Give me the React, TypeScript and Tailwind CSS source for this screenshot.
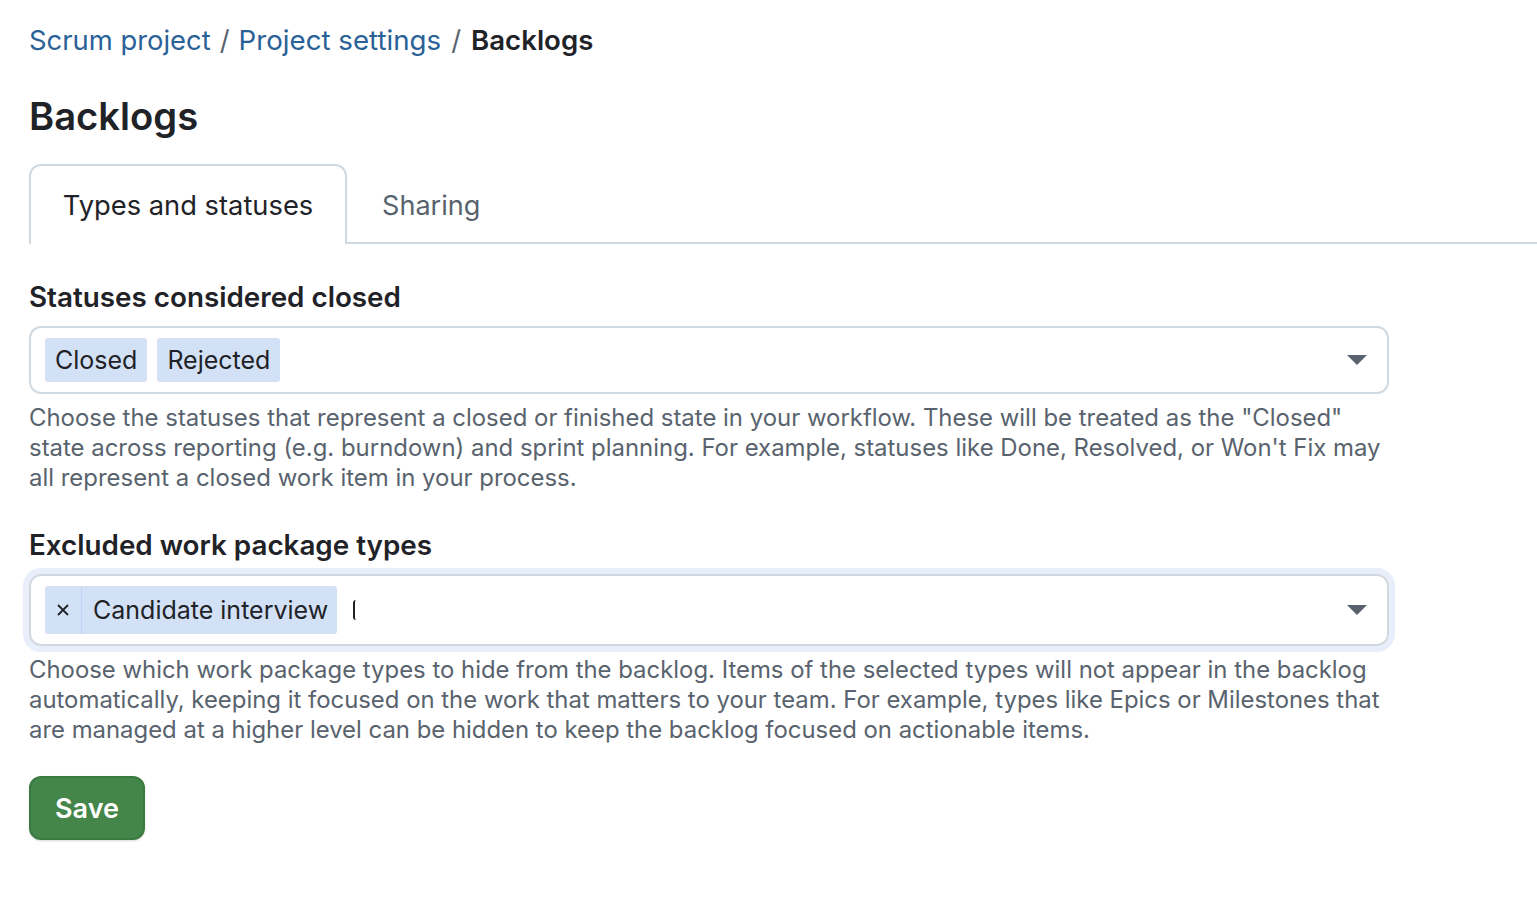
function Arrow() {
  return (
    <svg width="20" height="10" viewBox="0 0 20 10" className="shrink-0">
      <path d="M0 0h20L10 10z" fill="#59636e" />
    </svg>
  );
}

export default function App() {
  return (
    <div className="min-h-[897px] overflow-hidden bg-white font-['Inter',sans-serif] text-[#1f2328]">
      <nav className="mt-[22px] flex h-[36px] items-center pl-[29px] text-[27.4px] leading-[36px]">
        <a className="text-[#2a6196]">Scrum project</a>
        <span className="mx-[9px] text-[#59636e]">/</span>
        <a className="text-[27.7px] text-[#2a6196]">Project settings</a>
        <span className="mx-[10px] text-[#59636e]">/</span>
        <span className="text-[27.6px] font-semibold">Backlogs</span>
      </nav>

      <h1 className="mt-[32px] pl-[29px] text-[38.2px] font-semibold leading-[53px]">Backlogs</h1>

      <div className="ml-[29px] mt-[21px] flex h-[80px] items-end">
        <div className="flex h-[80px] w-[318px] items-center justify-center rounded-t-[12px] border-2 border-b-0 border-[#d1d9e0] bg-white pt-[2px] text-[27.3px]">
          Types and statuses
        </div>
        <div className="flex h-[80px] flex-1 items-center border-b-2 border-[#d1d9e0] pl-[35px] pt-[6px] text-[27.1px] text-[#59636e]">Sharing</div>
      </div>

      <div className="ml-[29px] w-[1360px]">
        <label className="mt-[35px] block text-[27.8px] font-semibold leading-[36px]">Statuses considered closed</label>
        <div className="mt-[11px] flex h-[68px] items-center justify-between rounded-[12px] border-2 border-[#d1d9e0] pl-[14px] pr-[20px]">
          <div className="flex gap-[10px]">
            <span className="flex h-[44px] items-center rounded-[3px] bg-[#d3e1f6] px-[10px] pt-[2px] text-[25px]">Closed</span>
            <span className="flex h-[44px] items-center rounded-[3px] bg-[#d3e1f6] px-[10px] pt-[2px] text-[25px]">Rejected</span>
          </div>
          <Arrow />
        </div>
        <p className="mt-[9px] text-[23.93px] leading-[30px] text-[#59636e]">
          Choose the statuses that represent a closed or finished state in your workflow. These will be treated as the "Closed" state across reporting (e.g. burndown) and sprint planning. For example, statuses like Done, Resolved, or Won't Fix may all represent a closed work item in your process.
        </p>

        <label className="mt-[34px] block text-[27.8px] font-semibold leading-[36px]">Excluded work package types</label>
        <div className="mt-[11px] flex h-[72px] items-center justify-between rounded-[12px] border-2 border-[#d1d9e0] pl-[14px] pr-[20px] shadow-[0_0_0_6px_#e8effb]">
          <div className="flex items-center">
            <span className="flex h-[48px] items-center rounded-[3px] bg-[#d3e1f6] text-[25px]">
              <span className="flex h-full w-[37px] items-center justify-center border-r border-[#bfd6f6]">
                <svg width="12" height="12" viewBox="0 0 12 12">
                  <path d="M1 1l10 10M11 1L1 11" stroke="#1f2328" strokeWidth="1.8" />
                </svg>
              </span>
              <span className="pl-[11px] pr-[9px] pt-[2px]">Candidate interview</span>
            </span>
            <span className="ml-[16px] h-[20px] w-[3px] rounded-l-full border-l-2 border-[#1f2328]" />
          </div>
          <Arrow />
        </div>
        <p className="mt-[9px] text-[23.9px] leading-[30px] text-[#59636e]">
          Choose which work package types to hide from the backlog. Items of the selected types will not appear in the backlog automatically, keeping it focused on the work that matters to your team. For example, types like Epics or Milestones that are managed at a higher level can be hidden to keep the backlog focused on actionable items.
        </p>

        <button className="mt-[31px] flex h-[64px] w-[116px] items-center justify-center rounded-[12px] border-2 border-[#3b7a40] bg-[#44864a] pt-[2px] text-[27px] font-semibold text-white shadow-[0_1px_2px_rgba(0,0,0,0.15)]">
          Save
        </button>
      </div>
    </div>
  );
}
